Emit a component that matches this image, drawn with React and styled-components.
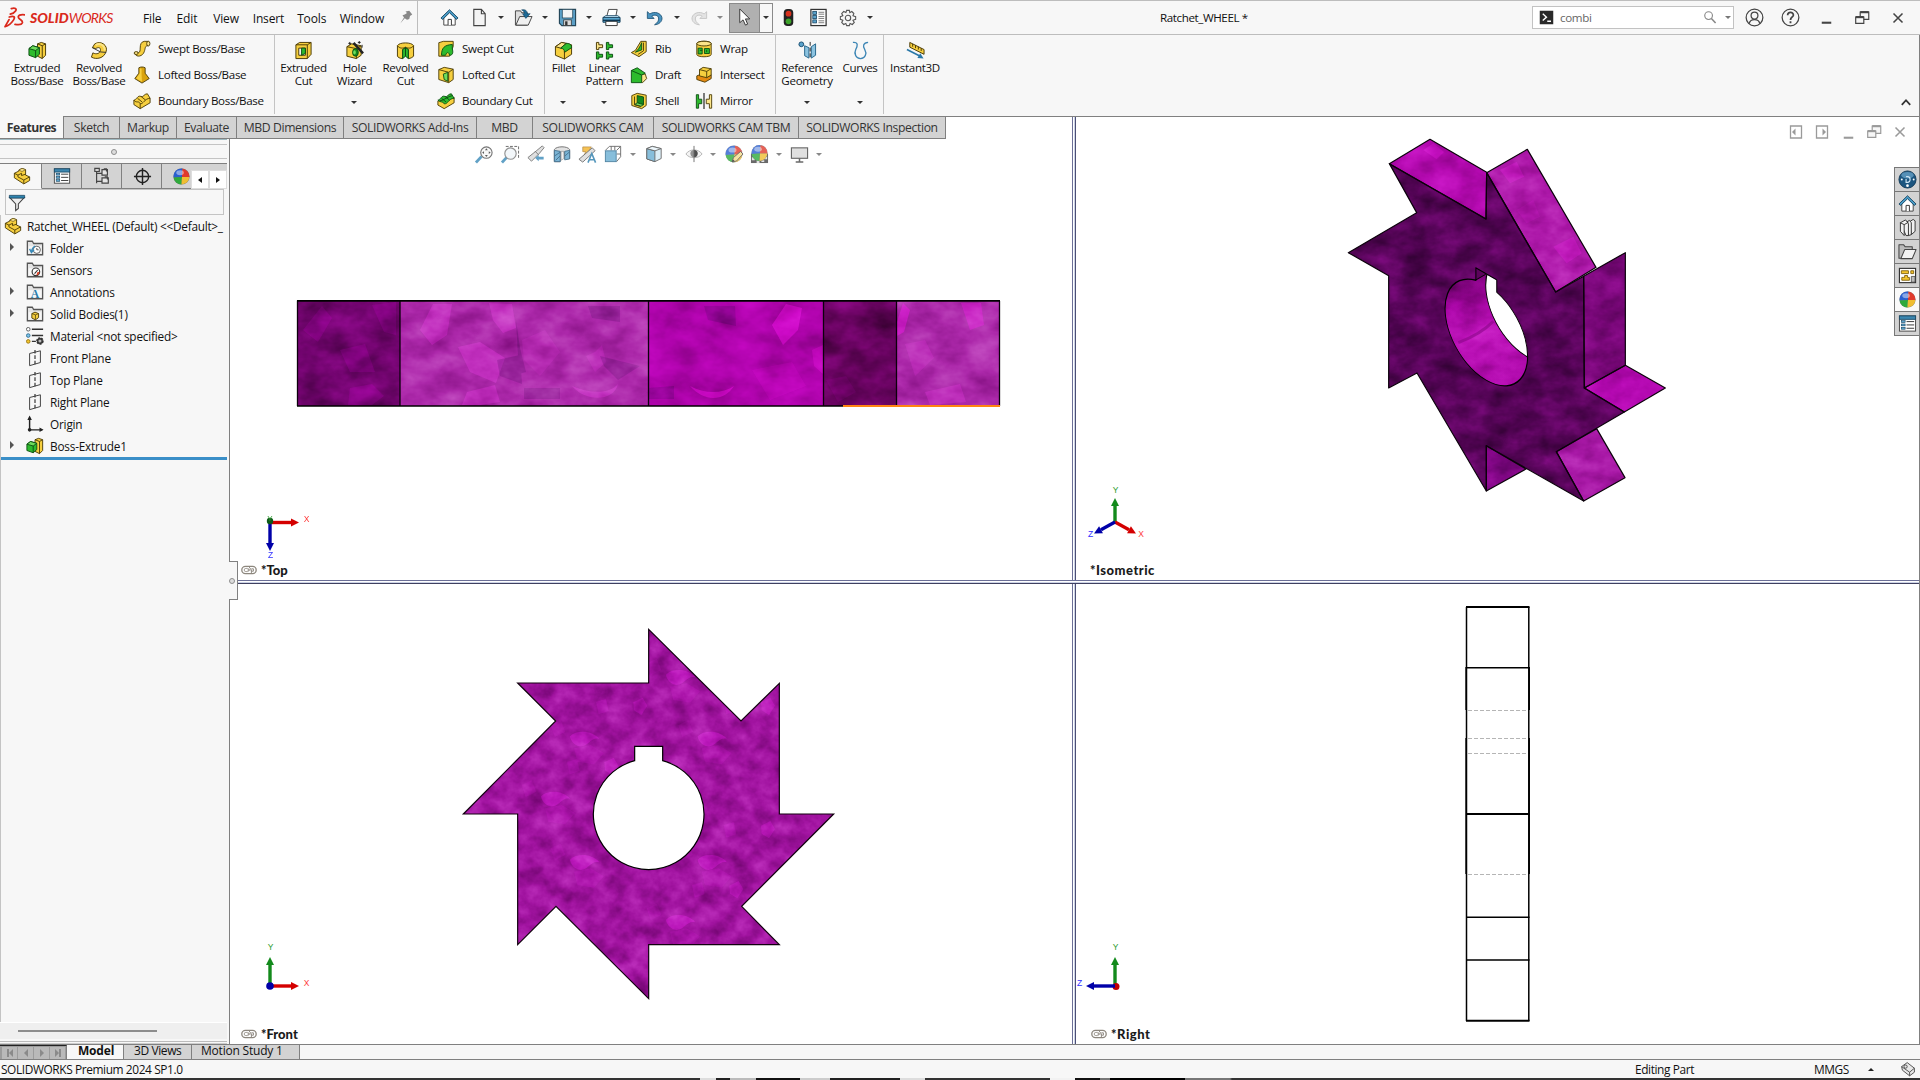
import React from "react";
import styled, { createGlobalStyle } from "styled-components";

const Global = createGlobalStyle`
  * { box-sizing: border-box; }
  html, body { margin: 0; padding: 0; }
  body { background: #f7f7f7; overflow: hidden; }
  svg { display: block; flex: none; }
`;

const C = {
  bg: "#f7f7f7",
  line: "#bdbdbd",
  dark: "#808080",
  tab: "#d3d3d3",
  blue: "#1d6a96",
  Y: "#f6cf3f",
  YL: "#fbe58a",
  YD: "#d9a30f",
  G: "#2dbb2d",
  GL: "#6fdc5c",
  GD: "#128a1d",
  S: "#4a3a05",
};

/* ---------- shell ---------- */
const Window = styled.div`
  width: 1920px;
  height: 1080px;
  display: flex;
  flex-direction: column;
  background: ${C.bg};
  color: #111;
  font-family: "Open Sans", "Noto Sans", sans-serif;
  font-size: 12px;
  overflow: hidden;
`;
const TitleBar = styled.header`
  flex: none;
  height: 35px;
  display: flex;
  align-items: center;
  border-top: 1px solid ${C.line};
  border-bottom: 1px solid ${C.line};
`;
const Brand = styled.div`
  width: 135px;
  padding-left: 4px;
  display: flex;
  align-items: center;
  gap: 5px;
  color: #da291c;
`;
const BrandName = styled.span`
  font: italic 400 14px/20px Lato, "Noto Sans", sans-serif;
  letter-spacing: -0.75px;
  padding-top: 1px;
  b { font-weight: 900; letter-spacing: 0; }
`;
const Menu = styled.nav`
  width: 283px;
  height: 100%;
  display: flex;
  align-items: center;
  padding-left: 8px;
  border-right: 1px solid ${C.line};
`;
const MenuItem = styled.span`
  width: ${(p) => p.$w}px;
  line-height: 20px;
  padding-top: 2px;
  letter-spacing: -0.15px;
`;
const QuickBar = styled.div`
  display: flex;
  align-items: center;
  height: 100%;
  padding-left: 19px;
  width: 742px;
`;
const Slot = styled.span`
  width: ${(p) => p.$w}px;
  margin-left: ${(p) => p.$ml || 0}px;
  display: flex;
  justify-content: center;
  align-items: center;
  flex: none;
  opacity: ${(p) => p.$o || 1};
`;
const BigDrop = styled.span`
  margin: 11px 1px 0 0;
`;
const SelectTool = styled.span`
  width: 44px;
  height: 30px;
  display: flex;
  flex: none;
  border: 1px solid #8a8a8a;
`;
const SelectFace = styled.span`
  width: 30px;
  background: #b0b0b0;
  border-right: 1px solid #8a8a8a;
  display: flex;
  align-items: center;
  justify-content: center;
`;
const Drop = styled.span`
  display: block;
  width: 0;
  height: 0;
  border: 3px solid transparent;
  border-top: 3px solid ${(p) => p.$c || "#333"};
  border-bottom: 0;
`;
const Center = styled.span`
  flex: 1;
  display: flex;
  align-items: center;
  justify-content: center;
`;
const DocTitle = styled.div`
  width: 372px;
  line-height: 18px;
  font-size: 11.6px;
  letter-spacing: -0.4px;
`;
const SearchBox = styled.div`
  width: 202px;
  height: 23px;
  display: flex;
  align-items: center;
  background: #fff;
  border: 1px solid #c2c2c2;
  padding-left: 6px;
  color: #666;
  margin-top: -1px;
  font-size: 11.6px;
  letter-spacing: -0.35px;
`;
const SearchText = styled.span`
  flex: 1;
  padding-left: 6px;
`;
const WinButtons = styled.div`
  display: flex;
  align-items: center;
  padding-left: 2px;
`;

/* ---------- ribbon ---------- */
const Ribbon = styled.div`
  flex: none;
  height: 82px;
  display: flex;
  border-bottom: 1px solid ${C.dark};
  border-right: 1px solid ${C.dark};
  font-size: 11.6px;
  letter-spacing: -0.32px;
`;
const Group = styled.div`
  width: ${(p) => p.$w}px;
  height: 79px;
  display: flex;
  flex: none;
  padding-left: ${(p) => p.$pl || 0}px;
  border-right: ${(p) => (p.$last ? 0 : 1)}px solid #c4c4c4;
`;
const Big = styled.div`
  width: ${(p) => p.$w}px;
  flex: none;
  display: flex;
  flex-direction: column;
  align-items: center;
  padding-top: 6px;
  height: 79px;
`;
const BigLabel = styled.span`
  height: 29px;
  margin-top: 1px;
  text-align: center;
  line-height: 13px;
  white-space: pre;
`;
const Col = styled.div`
  display: flex;
  flex-direction: column;
  margin-left: ${(p) => p.$ml || 0}px;
  width: ${(p) => p.$w || 138}px;
  flex: none;
`;
const Small = styled.div`
  height: 26px;
  display: flex;
  align-items: center;
  gap: 7px;
  white-space: nowrap;
  padding-top: 1px;
`;
const Collapse = styled.div`
  margin-left: auto;
  align-self: flex-end;
  padding: 0 6px 7px 0;
`;

/* ---------- body ---------- */
const Body = styled.main`
  flex: none;
  height: 927px;
  display: flex;
  border-right: 1px solid ${C.dark};
`;
const LeftHalf = styled.section`
  width: 1072px;
  flex: none;
  display: flex;
  flex-direction: column;
  background: #fff;
`;
const TabStrip = styled.div`
  height: 22px;
  flex: none;
  display: flex;
`;
const Tab = styled.span`
  width: ${(p) => p.$w}px;
  height: ${(p) => (p.$on ? 23 : 22)}px;
  margin-top: ${(p) => (p.$on ? -1 : 0)}px;
  padding-top: ${(p) => (p.$on ? 1 : 0)}px;
  background: ${(p) => (p.$on ? C.bg : C.tab)};
  border-right: 1px solid ${C.dark};
  border-bottom: 1px solid ${C.dark};
  display: flex;
  flex: none;
  align-items: center;
  justify-content: center;
  white-space: nowrap;
  font-size: 12.2px;
  font-weight: ${(p) => (p.$on ? 700 : 400)};
  color: #333;
  letter-spacing: ${(p) => (p.$on ? -0.5 : -0.38)}px;
`;
const LeftRow = styled.div`
  flex: 1;
  display: flex;
`;
const Views = styled.div`
  flex: 1;
  display: flex;
  flex-direction: column;
  min-width: 0;
`;
const Pane = styled.div`
  position: relative;
  height: ${(p) => p.$h}px;
  flex: none;
  background: #fff;
  display: flex;
  flex-direction: column;
  justify-content: space-between;
  overflow: hidden;
`;
const Scene = styled.svg`
  position: absolute;
  inset: 0;
`;
const ViewLabel = styled.div`
  position: relative;
  margin-top: auto;
  display: flex;
  align-items: center;
  gap: 4px;
  height: 20px;
  padding-left: ${(p) => p.$pl}px;
  font: 900 13px/20px Lato, sans-serif;
  letter-spacing: ${(p) => p.$ls ?? 0}px;
  color: #1a1a1a;
`;
const HBar = styled.div`
  height: 4px;
  flex: none;
  border-top: 1px solid #6b6f97;
  border-bottom: 1px solid #3f4060;
  background: linear-gradient(#fff 50%, #ccd3e6 50%);
`;
const VBar = styled.div`
  height: ${(p) => p.$h}px;
  width: 4px;
  border-left: 1px solid #6b6f97;
  border-right: 1px solid #4c4f75;
  background: linear-gradient(90deg, #fff 50%, #ccd3e6 50%);
`;
const Divider = styled.div`
  width: 4px;
  flex: none;
`;
const HeadsUp = styled.div`
  position: relative;
  display: flex;
  align-items: center;
  height: 30px;
  padding-left: 241px;
`;
const DocControls = styled.div`
  position: relative;
  display: flex;
  justify-content: flex-end;
  height: 30px;
  align-items: center;
  padding-right: 6px;
`;
const TaskPane = styled.div`
  position: absolute;
  right: 0;
  top: 50px;
  width: 25px;
  border: 1px solid #777;
  border-right: 0;
`;
const TaskItem = styled.div`
  height: ${(p) => (p.$first ? 23 : 24)}px;
  border-top: ${(p) => (p.$first ? 0 : 1)}px solid #777;
  background: ${(p) => (p.$on ? "#fafafa" : C.tab)};
  display: flex;
  align-items: center;
  justify-content: center;
`;

/* ---------- feature manager ---------- */
const Manager = styled.aside`
  position: relative;
  width: 230px;
  flex: none;
  background: ${C.bg};
  border-right: 1px solid ${C.dark};
  display: flex;
  flex-direction: column;
`;
const Grip = styled.div`
  width: 227px;
  height: 20px;
  border-top: 1px solid #9fb9c0;
  border-bottom: 1px solid #c4c4c4;
  display: flex;
  flex-direction: column;
  align-items: center;
  flex: none;
  &::before { content: ""; width: 100%; height: 4px; flex: none; border-bottom: 1px solid #c4c4c4; margin-bottom: 4px; }
`;
const Dot = styled.span`
  width: 6px;
  height: 6px;
  flex: none;
  border-radius: 50%;
  border: 1px solid #8e8e8e;
  background: #ddd;
`;
const MgrTabs = styled.div`
  margin-top: 4px;
  width: 227px;
  height: 26px;
  display: flex;
  flex: none;
  overflow: hidden;
`;
const MgrTab = styled.span`
  width: ${(p) => p.$w}px;
  flex: none;
  background: ${(p) => (p.$on ? C.bg : C.tab)};
  border-top: 1px solid ${C.dark};
  border-right: ${(p) => (p.$open ? 0 : 1)}px solid ${C.dark};
  border-bottom: 1px solid ${(p) => (p.$on ? C.bg : C.dark)};
  display: flex;
  align-items: center;
  justify-content: center;
  padding-left: ${(p) => p.$pl || 0}px;
`;
const Scrollers = styled.span`
  margin-left: auto;
  display: flex;
  align-items: flex-end;
  flex: none;
  width: 36px;
  background: ${C.tab};
  border-top: 1px solid ${C.dark};
`;
const Scroller = styled.span`
  width: 18px;
  height: 19px;
  background: #fff;
  border: 1px solid #ddd;
  display: flex;
  align-items: center;
  justify-content: center;
`;
const Side = styled.span`
  display: block;
  width: 0;
  height: 0;
  border: ${(p) => p.$s || 3}px solid transparent;
  ${(p) => (p.$left ? `border-right: 4px solid ${p.$c || "#111"}; border-left: 0;` : `border-left: 4px solid ${p.$c || "#111"}; border-right: 0;`)}
`;
const Filter = styled.div`
  margin: 0 0 0 5px;
  width: 219px;
  height: 26px;
  border: 1px solid #c4c4c4;
  padding: 4px 0 0 2px;
  flex: none;
`;
const Tree = styled.div`
  width: 228px;
  border-left: 1px solid #c4c4c4;
  flex: 1;
`;
const Row = styled.div`
  height: 22px;
  display: flex;
  align-items: center;
  white-space: nowrap;
  font-size: 11.8px;
  letter-spacing: ${(p) => p.$ls ?? -0.2}px;
`;
const Expander = styled.span`
  width: ${(p) => (p.$root ? 3 : 25)}px;
  padding-left: ${(p) => (p.$root ? 0 : 9)}px;
  padding-bottom: 2px;
  flex: none;
`;
const RowIcon = styled.span`
  width: 20px;
  margin-right: ${(p) => (p.$root ? 3 : 4)}px;
  flex: none;
`;
const Rollback = styled.div`
  height: 3px;
  width: 226px;
  background: #3a8fc8;
`;
const HScroll = styled.div`
  height: 17px;
  width: 227px;
  background: #efefef;
  border-top: 1px solid #fff;
  padding: 7px 0 0 18px;
  flex: none;
  &::before { content: ""; display: block; width: 139px; height: 2px; background: #8c8c8c; }
`;
const HScrollFoot = styled.div`
  height: 5px;
  flex: none;
  width: 227px;
  background: linear-gradient(#f7f7f7 2px, #bbb 2px, #bbb 3px, #f7f7f7 3px, #f7f7f7 4px, #ccc 4px);
`;
const SplitHandle = styled.div`
  position: absolute;
  right: -9px;
  top: 422px;
  width: 9px;
  height: 39px;
  background: ${C.bg};
  border: 1px solid ${C.dark};
  border-left: 0;
  display: flex;
  align-items: center;
  z-index: 3;
`;

/* ---------- bottom ---------- */
const SheetBar = styled.div`
  flex: none;
  height: 16px;
  display: flex;
  border-top: 1px solid ${C.dark};
  border-bottom: 1px solid ${C.dark};
`;
const NavButtons = styled.div`
  width: 67px;
  display: flex;
  gap: 1px;
  padding: 1px 1px 0 2px;
  background: #9c9c9c;
  border-top: 1px solid #222;
  border-right: 1px solid ${C.dark};
`;
const NavButton = styled.span`
  flex: 1;
  background: #b9b9b9;
  display: flex;
  align-items: center;
  justify-content: center;
  &::before { content: ""; width: ${(p) => (p.$first ? 2 : 0)}px; height: 8px; background: #8a8a8a; }
  &::after { content: ""; width: ${(p) => (p.$last ? 2 : 0)}px; height: 8px; background: #8a8a8a; }
`;
const Sheet = styled.span`
  width: ${(p) => p.$w}px;
  padding-left: ${(p) => p.$pl}px;
  background: ${(p) => (p.$on ? C.bg : C.tab)};
  border-right: 1px solid ${C.dark};
  font-weight: ${(p) => (p.$on ? 700 : 400)};
  line-height: 12px;
  white-space: nowrap;
  letter-spacing: ${(p) => p.$ls ?? -0.2}px;
`;
const Status = styled.footer`
  flex: none;
  height: 18px;
  display: flex;
  align-items: center;
  line-height: 18px;
  padding-left: 1px;
  white-space: nowrap;
  font-size: 11.9px;
  letter-spacing: ${(p) => p.$ls ?? -0.4}px;
`;
const StatusItem = styled.span`
  width: ${(p) => p.$w}px;
  flex: none;
`;
const Up = styled.span`
  width: 0;
  height: 0;
  border: 3px solid transparent;
  border-bottom: 3px solid #222;
  border-top: 0;
`;
const Under = styled.div`
  flex: none;
  height: 2px;
  background: linear-gradient(90deg, #333 0 700px, #ddd 700px 716px, #222 716px 730px, #bbb 730px 756px, #111 756px 800px, #ccc 800px 830px, #222 830px 900px, #ddd 900px 925px, #333 925px 1050px, #f2f2f2 1050px 1075px, #111 1075px 1100px, #777 1100px 1110px, #000 1110px 1185px, #777 1185px 1230px, #333 1232px);
`;

/* ---------- icons ---------- */
const st = { stroke: C.S, strokeWidth: 1, strokeLinejoin: "round" };
const gs = { stroke: "#0b4d12", strokeWidth: 1, strokeLinejoin: "round" };
const ln = { fill: "none", stroke: "#444", strokeWidth: 1.3 };
const Globe = () => (
  <g>
    <circle cx="10" cy="10" r="8.500" fill="#333" opacity=".6" />
    <path d="M10.500 10.500L11 1.700A8.300 8.300 0 0 0 1.700 11Z" fill="#2a5fd0" />
    <path d="M10.500 10.500L11 1.700A8.300 8.300 0 0 1 18.300 10.500Z" fill="#e03a2d" />
    <path d="M10.500 10.500L1.700 11A8.300 8.300 0 0 0 10 18.300Z" fill="#2faa3c" />
    <path d="M10.500 10.500L18.300 10.500A8.300 8.300 0 0 1 10 18.300Z" fill="#f0be32" />
    <ellipse cx="8.500" cy="6" rx="4" ry="2.600" fill="#fff" opacity=".45" />
  </g>
);
const FolderBox = () => (
  <g>
    <path d="M1.500 17.500V2.500H7L8.500 5H18.500V17.500Z" fill="#e4e4e4" stroke="#555" strokeWidth="1.4" />
    <path d="M3 8H17V16H3Z" fill="#f7f7f7" />
  </g>
);
const Plane = () => (
  <g>
    <path d="M4 5L16 2V15L4 18.500Z" fill="none" stroke="#444" strokeWidth="1.1" />
    <path d="M10 1V19" stroke="#333" strokeWidth="1.3" strokeDasharray="4 2" />
  </g>
);
const House = () => (
  <g>
    <path d="M4 10V18H16V10L10 4Z" fill="#fff" stroke="#444" />
    <path d="M8.500 18V12H12V18" fill="#fff" stroke="#333" />
    <path d="M1 10.500L10 1.800L19 10.500L17.200 12L10 5L2.800 12Z" fill="#4a9cc7" stroke="#123f5c" strokeWidth=".9" />
  </g>
);
const Part = () => (
  <g {...st}>
    <path d="M1.500 7L6.500 4.500V3.500L10 1.500L14 3V9L18.500 11V15L12 18.800L1.500 12Z" fill={C.Y} />
    <path d="M1.500 7L5.500 9V11L12 14.500L18.500 11M12 14.500V18.500M5.500 9L9.500 7V9.500L14 8" fill="none" />
    <path d="M6.500 3.500L10 1.500L14 3L10 5Z" fill={C.YL} strokeWidth=".6" />
  </g>
);
const Extrude = () => (
  <g>
    <path d="M10 3L14 1.500L18.500 3V15L15 18.500L10 16Z" fill={C.Y} {...st} />
    <path d="M15 5L18.500 3M15 5V18.500M15 5L10 3" fill="none" {...st} />
    <path d="M1 8L5 5L12 7V14L8 17.500L1 15Z" fill={C.G} {...gs} />
    <path d="M1 8L8 10L12 7L5 5Z" fill={C.GL} {...gs} />
    <path d="M8 10V17.500" {...gs} />
  </g>
);
const Sheet7 = () => (
  <g>
    <rect x="1.500" y="2" width="17" height="16" fill="#fff" stroke="#444" />
    <rect x="1.500" y="2" width="17" height="3.600" fill="#3c87b0" stroke="#1d4e6b" />
    {[8, 11.5, 15].map((y) => (
      <g key={y}>
        <rect x="3.500" y={y - 1} width="4" height="2" fill="#5ba3cc" stroke="#123f5c" strokeWidth=".6" />
        <path d={`M9 ${y}H17`} stroke="#333" />
      </g>
    ))}
  </g>
);
const icons = {
  ds: (
    <g fill="none" stroke="#da291c" strokeWidth="1.700" strokeLinecap="round" strokeLinejoin="round">
      <path d="M7 1.500C10.500 .3 12.500 1.500 11 3.800C10 5.300 7.500 6.500 6 6.800" />
      <path d="M5 9.500C9.500 8 11 9.500 9 12.500C7 15.500 3.500 18 1 18.700L4.800 12" />
      <path d="M20 7.500C16 6.800 12.500 8 14 10.500C15.500 12.500 18 12.500 17.500 15C16.500 17.500 13 17 10.500 16.500" />
    </g>
  ),
  pin: <path d="M10 2L15 1L19 6L16 8L15 12L12 13L9 11L3 18L8 10L6 7L9 6L12 4Z" fill="#888" />,
  home: <House />,
  newdoc: <path d="M4 1.500H12L16 6V18.500H4ZM12 1.500V6H16" fill="#f4f4f4" stroke="#444" strokeWidth="1.2" />,
  open: (
    <g>
      <path d="M1.500 18V3H7L8 5H14V18Z" fill="#ddd" stroke="#444" />
      <path d="M2 18L6 9H19L15 18Z" fill="#f0f0f0" stroke="#444" />
      <path d="M8 2C12 1 14 3 14 6H17L12.500 11L9 6H11C11 4 10 3 8 2Z" fill="#1d6a96" stroke="#0d3d5c" strokeWidth=".6" />
    </g>
  ),
  save: (
    <g>
      <path d="M1.500 1.500H18.500V18.500H4L1.500 16Z" fill="#5b9fc6" stroke="#24475a" strokeWidth="1.200" />
      <rect x="4.500" y="1.500" width="11" height="9" fill="#f4f4f4" stroke="#24475a" strokeWidth=".8" />
      <rect x="6" y="12.500" width="8" height="6" fill="#dcdcdc" stroke="#333" strokeWidth=".8" />
      <rect x="7.500" y="14" width="2.500" height="4" fill="#333" />
    </g>
  ),
  print: (
    <g>
      <path d="M5 9L7 1.500H16L14.500 9" fill="#fff" stroke="#444" />
      <path d="M1 10H19V15H1Z" fill="#5aa7cf" stroke="#123f5c" />
      <path d="M1 10L4 8H16.500L19 10Z" fill="#b8dcee" stroke="#123f5c" strokeWidth=".8" />
      <path d="M4 14H16V18.500H4Z" fill="#fff" stroke="#333" />
      <path d="M1 13H19" stroke="#0e3550" strokeWidth="1.500" />
    </g>
  ),
  undo: (
    <path d="M1.500 3V10.500H9L6.500 8C9 6 13.500 6.500 14 10C14.500 13 12.500 15.500 9.500 17.500C14 17.500 18.500 14 17.700 9.500C16.700 4.500 9.500 2 4.300 5.500Z" fill="#4a94c0" stroke="#174d70" strokeWidth=".9" />
  ),
  redo: (
    <path d="M18.500 3V10.500H11L13.500 8C11 6 6.500 6.500 6 10C5.500 13 7.500 15.500 10.500 17.500C6 17.500 1.500 14 2.300 9.500C3.300 4.500 10.500 2 15.700 5.500Z" fill="#e3e3e3" stroke="#c0c0c0" strokeWidth=".9" />
  ),
  cursor: <path d="M5 1V15.500L8.500 12.500L11 18L13.300 17L11 11.500H15.500Z" fill="#fff" stroke="#333" strokeWidth="1" />,
  traffic: (
    <g>
      <rect x="5" y="1" width="10" height="18" rx="4" fill="#222" />
      <circle cx="10" cy="6" r="3" fill="#d8311d" />
      <circle cx="10" cy="14" r="3" fill="#3da32a" />
    </g>
  ),
  options: (
    <g>
      <rect x="2" y="1.500" width="16" height="17" fill="#fff" stroke="#333" strokeWidth="1.300" />
      {[4.5, 9, 13.5].map((y) => (
        <g key={y}>
          <rect x="4" y={y - 1} width="4" height="3.200" fill="#5ba3cc" stroke="#123f5c" strokeWidth=".8" />
          <path d={`M10 ${y}H16M10 ${y + 2}H16`} stroke="#555" strokeWidth=".8" />
        </g>
      ))}
    </g>
  ),
  gear: (
    <g fill="none" stroke="#555" strokeWidth="1.200">
      <path d="M8.500 1.500H11.500L12 4L14.200 2.800L16.500 5L15.500 7.500L18.500 8.500V11.500L15.500 12.500L17 15L14.800 17.200L12.300 16L11.500 18.500H8.500L7.600 16L5.200 17.200L3 15L4.300 12.500L1.500 11.500V8.500L4.300 7.500L3 5L5.200 2.800L7.700 4Z" />
      <circle cx="10" cy="10" r="3" />
    </g>
  ),
  prompt: (
    <g>
      <rect x="1" y="1" width="18" height="18" fill="#2a2a2a" />
      <path d="M5 5L10 9.500L5 14M11 15H16" fill="none" stroke="#fff" strokeWidth="1.800" />
    </g>
  ),
  search: (
    <g fill="none" stroke="#888">
      <circle cx="8" cy="8" r="5.500" strokeWidth="1.600" />
      <path d="M12 12L18 18.500" strokeWidth="2.200" />
    </g>
  ),
  user: (
    <g {...ln}>
      <circle cx="10" cy="10" r="8.800" />
      <circle cx="10" cy="8" r="3.600" />
      <path d="M4.500 16.500C5 13 7.500 12.300 10 12.300S15 13 15.500 16.500" />
    </g>
  ),
  help: (
    <g {...ln}>
      <circle cx="10" cy="10" r="8.800" />
      <path d="M7 7.500C7 3.500 13.200 4 13 7.500C12.800 9.800 10 9.500 10 12.500M10 14V16" strokeWidth="1.900" />
    </g>
  ),
  min: <path d="M5 15.500H15" stroke="currentColor" strokeWidth="2.200" />,
  restore: (
    <g fill={C.bg} stroke="currentColor" strokeWidth="1.300">
      <path d="M8 3.500H17.500V11.500H8Z" />
      <path d="M8 3.500H17.500" strokeWidth="2.400" />
      <path d="M3 9H12V16H3Z" />
      <path d="M3 9H12" strokeWidth="2.400" />
    </g>
  ),
  close: <path d="M5 5L15 15M15 5L5 15" stroke="currentColor" strokeWidth="1.700" />,
  dockL: (
    <g>
      <path d="M4.500 4V16H15.500V4ZM4 4H16" fill="none" stroke="currentColor" strokeWidth="1.300" />
      <path d="M9.500 6.500L6 10L9.500 13.500Z" fill="currentColor" />
    </g>
  ),
  dockR: (
    <g>
      <path d="M4.500 4V16H15.500V4ZM4 4H16" fill="none" stroke="currentColor" strokeWidth="1.300" />
      <path d="M10.500 6.500L14 10L10.500 13.500Z" fill="currentColor" />
    </g>
  ),
  chevron: <path d="M4 14L10 7.500L16 14" fill="none" stroke="#333" strokeWidth="2.600" />,

  extrude: <Extrude />,
  revolve: (
    <g {...st}>
      <path d="M5 3C12 -1 19 5 17 11C15 18 7 20 1.500 17L3 12.500C7 14.500 10.500 13 11 10C11.500 7 9 6 6 8L2.500 7Z" fill={C.Y} />
      <path d="M2.500 7L11 11.500L17 12" fill="none" stroke="#333" />
      <path d="M6 4C11 1.500 16 5 15.500 10" fill="none" stroke={C.YL} strokeWidth="2" />
    </g>
  ),
  sweep: (
    <g>
      <path d="M12.500 1.500H17V6.500C13 6 14 9 12.500 13C11 18 4 20 2 15L5 13.500C7 15 8 13 8 9C8 5 9 2 12.500 1.500Z" fill={C.Y} {...st} />
      <ellipse cx="17" cy="4" rx="1.800" ry="2.600" fill={C.YL} {...st} />
      <ellipse cx="3.500" cy="14.500" rx="2.200" ry="1.600" fill={C.YL} {...st} />
    </g>
  ),
  loft: (
    <g>
      <path d="M6.500 2C8 .8 12 .8 13.500 2V8L18 14L10 19L2 14L6.500 8Z" fill={C.YD} {...st} />
      <path d="M7.500 2.500L9.500 3V9L10 17.500L3.500 14L7.500 8Z" fill={C.Y} />
    </g>
  ),
  boundary: (
    <g {...st}>
      <path d="M1 9C4 9 5 3 9 5C12 6 12 2 16 2L19 7V12L8 18.500L1 14Z" fill={C.Y} />
      <path d="M1 9C4 13 6 9 8 13C11 14 13 7 19 7M8 13V18.500M5 7L10 11M9 5L14 9" fill="none" />
    </g>
  ),
  ecut: (
    <g>
      <path d="M2 4L6 1.500H18V14L14 18.500H2Z" fill={C.Y} {...st} />
      <path d="M2 4H14L18 1.500M14 4V18.500" fill="none" {...st} />
      <path d="M5 7.500H12V15H5Z" fill="#f3f3f3" {...st} />
      <path d="M8 7.500H12V13L8 15Z" fill={C.G} {...gs} />
    </g>
  ),
  hole: (
    <g>
      <path d="M2 6L7 3L17 5V15L12 18.500L2 16Z" fill={C.Y} {...st} />
      <path d="M2 6L12 8L17 5M12 8V18.500" fill="none" {...st} />
      <ellipse cx="11" cy="12" rx="3" ry="4" fill={C.GD} {...gs} />
      <ellipse cx="10" cy="12" rx="1.400" ry="2.200" fill={C.GL} />
      <path d="M9 2L19 13" stroke="#222" strokeWidth="2.600" />
      <path d="M5 1V4M3.500 2.500H6.500M15 0V3M13.500 1.500H16.500M18 4V7" stroke="#222" />
    </g>
  ),
  rcut: (
    <g>
      <path d="M1.500 5C3 1 17 1 18.500 5V16C16 18.500 13 18.500 13 18.500V9L10 7L7 9V18.500C4 18.500 2 17 1.500 16Z" fill={C.Y} {...st} />
      <path d="M1.500 5C4 8 7 8 10 6.500C13 8 16 8 18.500 5" fill="none" {...st} />
      <path d="M7 9L10 7V16L7 18.500ZM13 9L10 7V16L13 18.500Z" fill={C.G} {...gs} />
    </g>
  ),
  scut: (
    <g>
      <path d="M2 3L7 1.500H18V7L14 18H2Z" fill={C.Y} {...st} />
      <path d="M5 17C5 9 8 5.500 17 5V10C18 13 18 17 14 17C13 13 11 13 9.500 17Z" fill={C.G} {...gs} />
    </g>
  ),
  lcut: (
    <g>
      <path d="M2 4L8 1.500L18 3.500V15L13 18.500L2 15Z" fill={C.Y} {...st} />
      <path d="M2 4L13 7L18 3.500M13 7V18.500" fill="none" {...st} />
      <path d="M7 9L12 7V17L8 15Z" fill={C.GL} {...gs} />
    </g>
  ),
  bcut: (
    <g>
      <path d="M1 10L19 6V12L8 18.500L1 14.500Z" fill={C.Y} {...st} />
      <path d="M1 9C4 9 5 3 9 5C12 6 12 2 16 2L19 7C13 7 12 14 8 13C6 10 4 12 1 9Z" fill={C.G} {...gs} />
      <path d="M5 7L10 11M9 5L14 9M3 10C8 9 12 5 17 4" fill="none" {...gs} />
    </g>
  ),
  fillet: (
    <g>
      <path d="M1.500 6L8 1.500L18.500 4V14L11 19L1.500 15Z" fill={C.Y} {...st} />
      <path d="M1.500 6L8 1.500L13 2.500L7 7.500Z" fill={C.YL} {...st} />
      <path d="M13 2.500C17 2.500 18.500 4 18.500 7L11 12C11 9 10 8 7 7.500Z" fill={C.G} {...gs} />
      <path d="M11 11V19" {...st} />
    </g>
  ),
  pattern: (
    <g>
      <path d="M1.500 1.500H4V4H8V7H4V9H1.500Z" fill={C.YL} {...st} />
      <path d="M12 1.500H14.500V4H18.500V7H14.500V9H12Z" fill={C.G} {...gs} />
      <path d="M1.500 11.500H4V14H8V17H4V19H1.500Z" fill={C.G} {...gs} />
      <path d="M12 11.500H14.500V14H18.500V17H14.500V19H12Z" fill={C.G} {...gs} />
    </g>
  ),
  rib: (
    <g>
      <path d="M12 1.500H18V13L10 18.500L1.500 14L6 11.500Z" fill={C.Y} {...st} />
      <path d="M13 3V11L6 13.500C9 11 11 8 13 3Z" fill={C.G} {...gs} />
      <path d="M15 3V12L9 16" fill="none" {...st} />
    </g>
  ),
  draft: (
    <g>
      <path d="M10 9H17L18.500 14L14 18.500L10 16Z" fill={C.YL} {...st} />
      <path d="M1.500 5L8 2L17 8L13 10V18.500H1.500Z" fill={C.G} {...gs} />
      <path d="M1.500 5L13 10" {...gs} />
    </g>
  ),
  shell: (
    <g>
      <path d="M2 4L8 1.500L18 3.500V15L13 18.500L2 15Z" fill={C.Y} {...st} />
      <path d="M8 4L15 5.500V14L8 12Z" fill={C.GD} {...gs} />
      <path d="M8 12L15 14L12 16L5 14Z" fill={C.GL} {...gs} />
      <path d="M5 5V14L12 16" fill="none" {...st} />
    </g>
  ),
  wrap: (
    <g>
      <path d="M2 4C2 .5 18 .5 18 4V16C18 19.500 2 19.500 2 16Z" fill={C.Y} {...st} />
      <ellipse cx="10" cy="4" rx="8" ry="2.600" fill={C.YL} {...st} />
      <path d="M3.500 9H8V15.500H3.500ZM10.500 9.500H16V15H10.500Z" fill={C.G} {...gs} />
      <path d="M5.500 11.500H8M13 11V13.500" {...gs} />
    </g>
  ),
  intersect: (
    <g>
      <path d="M2 11L7 9L14 12L18 10V14L11 18L2 15Z" fill="#e58a12" {...st} />
      <path d="M5 4L9 1.500L18 3V10L13 13L5 11Z" fill={C.Y} {...st} />
      <path d="M5 4L13 6L18 3M13 6V13" fill="none" {...st} />
    </g>
  ),
  mirror: (
    <g>
      <path d="M1.500 3H4V8H7.500V13H4V18H1.500Z" fill={C.G} {...gs} />
      <path d="M18.500 3H16V8H12.500V13H16V18H18.500Z" fill={C.YL} {...st} />
      <path d="M10 1V19" stroke="#222" strokeWidth="1.300" />
    </g>
  ),
  refgeo: (
    <g>
      <circle cx="3.500" cy="3.500" r="2.500" fill="#5ba3cc" stroke="#174d70" />
      <path d="M7 5L11.500 7V18L7 15.500ZM14 6L18.500 3V15L14 18Z" fill="#8cc3e0" stroke="#24648a" />
      <path d="M12.800 1V19" stroke="#222" strokeDasharray="4 2" />
    </g>
  ),
  curves: (
    <path d="M2 1.500C8 1 7 5 5 9C3 13 5 18.500 10 18.500C15 18.500 17 13 14.500 9C12 5 13 2 18 1.500" fill="none" stroke="#3d86b5" strokeWidth="1.400" />
  ),
  instant: (
    <g>
      <path d="M4 1.500L19 9V14L4 6.500Z" fill={C.Y} {...st} />
      <path d="M7 3V6M10 4.500V7.500M13 6V9M16 7.500V10.500" {...st} />
      <path d="M1 9L15 16" stroke="#2a78a8" strokeWidth="1.800" />
      <path d="M18.500 18.500L12 18L15 13Z" fill="#2a78a8" />
    </g>
  ),

  part: <Part />,
  props: <Sheet7 />,
  config: (
    <g {...ln}>
      <path d="M2 1.500H7V5H2ZM4 5V18M4 7H10M4 16H10" />
      <path d="M10 3H16V9H10ZM10 12H17V18H10Z" fill="#e5e5e5" />
      <path d="M12 2H15V5M13 11H16V14" />
    </g>
  ),
  target: (
    <g fill="none" stroke="#222" strokeWidth="1.500">
      <circle cx="10" cy="10" r="6.500" />
      <path d="M10 1V19M1 10H19" />
    </g>
  ),
  globe: <Globe />,
  filter: (
    <g>
      <path d="M2 4L8.500 11V18.500L11.500 16V11L18 4Z" fill="#eee" stroke="#444" strokeWidth="1.200" />
      <path d="M1.500 1.500H18.500V4.500H1.500Z" fill="#2f83ae" stroke="#123f5c" strokeWidth=".8" />
    </g>
  ),
  folder: (
    <g>
      <FolderBox />
      <circle cx="12" cy="12" r="4" fill="#fff" stroke="#555" />
      <path d="M12 10V12H14" fill="none" stroke="#444" />
      <path d="M4 11L6 15L9 12M6 14C7 10 8 9 10 8" fill="none" stroke="#3a8ab8" strokeWidth="1.500" />
    </g>
  ),
  sensors: (
    <g>
      <FolderBox />
      <circle cx="11" cy="12" r="4.200" fill="#fff" stroke="#333" strokeWidth="1.300" />
      <path d="M9.500 14L13 10" stroke="#333" strokeWidth="1.200" />
      <path d="M11.500 16A4 4 0 0 0 15 12L12.500 12.500Z" fill="#e0452a" />
    </g>
  ),
  annot: (
    <g>
      <FolderBox />
      <text x="10" y="16.300" textAnchor="middle" fontFamily="Liberation Serif, serif" fontWeight="700" fontSize="13" fill="#2a7cab">A</text>
    </g>
  ),
  bodies: (
    <g>
      <FolderBox />
      <path d="M6.500 9.500L10 8L14 9.500V14L10.500 16.500L6.500 14.500Z" fill={C.Y} {...st} />
      <path d="M6.500 9.500L10.500 11L14 9.500M10.500 11V16.500" fill="none" {...st} strokeWidth=".8" />
    </g>
  ),
  material: (
    <g>
      <circle cx="2.500" cy="2.500" r="2" fill="#fff" stroke="#555" />
      <circle cx="2.500" cy="9.500" r="2" fill="#7cc4ea" stroke="#2a6a90" />
      <circle cx="2.500" cy="16" r="2" fill="#f3c62e" stroke="#9a7410" />
      <path d="M6.500 2.500H19M6.500 9.500H19M6.500 16H11" stroke="#333" strokeWidth="1.600" />
      <circle cx="15.500" cy="15.500" r="3.200" fill="#bbb" stroke="#333" strokeWidth="2" strokeDasharray="2.200 1" />
      <circle cx="15.500" cy="15.500" r="2.500" fill="none" stroke="#333" strokeWidth="1.500" />
    </g>
  ),
  plane: <Plane />,
  origin: (
    <g>
      <path d="M4 3V16.500H18" fill="none" stroke="#222" strokeWidth="1.600" />
      <path d="M4 .5L6.500 5.500H1.500ZM19.500 16.500L15 14V19Z" fill="#222" />
      <circle cx="4" cy="16.500" r="2" fill="#222" />
    </g>
  ),

  zoomfit: (
    <g>
      <path d="M1 18.500L7 12" stroke="#3a8ab8" strokeWidth="3" />
      <circle cx="12" cy="8" r="6" fill="#f8f8f8" stroke="#555" strokeWidth="1.200" />
      <path d="M12 3.500L13.500 5.500H10.500ZM12 12.500L13.500 10.500H10.500ZM7.500 8L9.500 6.500V9.500ZM16.500 8L14.500 6.500V9.500Z" fill="#333" />
    </g>
  ),
  zoomarea: (
    <g>
      <path d="M5 1.500H18.500V15" fill="none" stroke="#444" strokeDasharray="3 1.500" />
      <path d="M1 18.500L6 13" stroke="#3a8ab8" strokeWidth="3" />
      <circle cx="10" cy="9" r="6" fill="#f1f6f9" stroke="#777" strokeWidth="1.200" />
    </g>
  ),
  prevview: (
    <g>
      <path d="M1 14L11 6L17 1L19 3L14 9L5 18Z" fill="#d9d9d9" stroke="#555" />
      <path d="M9 7L13 11" stroke="#555" />
      <path d="M9 14.500L13 11V13H18.500V16H13V18Z" fill="#3a8ab8" />
    </g>
  ),
  section: (
    <g>
      <path d="M1.500 5C4 1 16 1 18.500 5V15H13V8H8V18.500H1.500Z" fill="#dcdcdc" stroke="#444" />
      <path d="M1.500 6L8 7V18.500H1.500ZM13 7L18.500 6V15.500L13 16.500Z" fill="#5ba3cc" stroke="#174d70" />
      <path d="M2 12L8 8M3 17L8 12M13.500 12L18 8" stroke="#174d70" />
      <path d="M9 7H12V15L9 17Z" fill="#eee" stroke="#777" strokeWidth=".7" />
    </g>
  ),
  dynview: (
    <g>
      <path d="M5 2H14L11 7H13L6 12L8 7H5Z" fill="#f3b32a" stroke="#a06a10" strokeWidth=".7" />
      <path d="M1 15L15 3L18 6L5 18Z" fill="#d9d9d9" stroke="#555" />
      <path d="M10.500 18.500L14.500 9L18.500 18.500M12 15.500H17" stroke="#2a7cab" strokeWidth="1.700" fill="none" />
    </g>
  ),
  orient: (
    <g>
      <path d="M1.500 6L6 1.500H18.500V13L14 18.500" fill="#fff" stroke="#444" />
      <path d="M14 6L18.500 1.500M8 1.500V6M14 10H18.500M12 1.500V6" stroke="#444" />
      <rect x="1.500" y="6.500" width="12" height="12" fill="#6aaed3" stroke="#24648a" />
    </g>
  ),
  display: (
    <g stroke="#444" strokeLinejoin="round">
      <path d="M2 4L8 1.500L18 4V15L11 18.500L2 15.500Z" fill="#d4ebf6" />
      <path d="M2 4L11 6.500V18.500L2 15.500Z" fill="#6aaed3" />
      <path d="M2 4L8 1.500L18 4L11 6.500Z" fill="#e8f5fb" />
    </g>
  ),
  eye: (
    <g>
      <path d="M1 10C5 4 15 4 19 10C15 15.500 5 15.500 1 10Z" fill="#f2f2f2" stroke="#999" />
      <circle cx="10" cy="9.500" r="4" fill="#777" />
      <path d="M10 5.500A4 4 0 0 1 10 13.500Z" fill="#222" />
      <path d="M10 1V19" stroke="#444" />
    </g>
  ),
  appearance: (
    <g>
      <Globe />
      <path d="M8 18L9.500 13.500L16.500 7.500L19 10L12.500 17Z" fill="#f5dc8a" stroke="#444" strokeWidth=".9" />
      <path d="M8 18L9 15.500L10.700 17Z" fill="#222" />
    </g>
  ),
  sceneico: (
    <g>
      <path d="M1 9V19H19V9Z" fill="#444" />
      <path d="M2 13H5V16H2ZM7 16H10V19H7ZM12 16H15V18H12ZM15 12H18V15H15Z" fill="#ddd" />
      <g transform="translate(0 -1.500)"><Globe /></g>
    </g>
  ),
  monitor: (
    <g>
      <rect x="1.500" y="3" width="17" height="11" fill="#d9d9d9" stroke="#444" strokeWidth="1.200" />
      <path d="M10 14V18M6 18H14" stroke="#444" strokeWidth="1.600" />
    </g>
  ),

  portal: (
    <g>
      <circle cx="10" cy="10" r="9" fill="#1c5680" stroke="#123a58" />
      <ellipse cx="10" cy="5.500" rx="6.500" ry="3.500" fill="#6fa9cf" opacity=".7" />
      <path d="M8.500 7H10.500C13.500 7.500 13.500 12.500 10.500 13H8.500V9.500" fill="none" stroke="#cfe6f5" strokeWidth="1.200" />
      <circle cx="4" cy="10" r="1" fill="#fff" /><circle cx="16.500" cy="10" r="1" fill="#fff" />
      <circle cx="10" cy="16.500" r="1.400" fill="#fff" />
    </g>
  ),
  library: (
    <g fill="#f1f1f1" stroke="#333" strokeWidth="1" strokeLinejoin="round">
      <path d="M12 4L16 1.500L18 3V14L14 17.500Z" />
      <path d="M8 5L12 2.500L14 5V17.500L11 18.500Z" />
      <path d="M2.500 5L8 2L11 6V18.500L8.500 18.500Z" />
      <path d="M2.500 5L6.500 7V18.500L2.500 14ZM6.500 7L11 4.500" />
    </g>
  ),
  openfolder: (
    <g stroke="#444" strokeWidth="1.100" strokeLinejoin="round">
      <path d="M1 17V3H6L7.500 5H15V8L6 17Z" fill="#bbb" />
      <path d="M3 17.500L7 8H19L15 17.500Z" fill="#f2f2f2" />
    </g>
  ),
  palette: (
    <g>
      <rect x="1.500" y="2.500" width="17" height="15" fill="#fff" stroke="#333" strokeWidth="1.200" />
      <path d="M3.500 5H11V8H3.500ZM13.500 5H16.500V8H13.500ZM6 12H7V10H10V12H12V15H4V12Z" fill="#f5c52c" stroke="#7a5b05" strokeWidth=".9" />
      <path d="M14 11H18V17H14Z" fill="#bbb" stroke="#444" strokeWidth=".8" />
    </g>
  ),
  link: (
    <g fill="none" stroke="#8d877e" strokeWidth="1.600">
      <rect x="1" y="5.500" width="18" height="9" rx="4.500" />
      <rect x="4" y="8" width="6" height="4" rx="2" strokeWidth="1" />
      <path d="M10 6L13 10V14M8 10H12M13 8.500H15.500V11.500H13" strokeWidth="1.200" />
    </g>
  ),
  tag: (
    <g fill="#e8e8e8" stroke="#444" strokeWidth="1.100" strokeLinejoin="round">
      <path d="M2 7L9 2L18 9V14L12 18.500L3 11.500Z" />
      <path d="M2 7L12 14L18 9M12 14V18.500" fill="none" />
      <circle cx="7" cy="7" r="2" />
    </g>
  ),
};
const Icon = ({ n, s = 18, w, c = "#444" }) => (
  <svg width={w || s} height={s} viewBox="0 0 20 20" preserveAspectRatio="none" color={c}>
    {icons[n]}
  </svg>
);

/* ---------- drawings ---------- */
const Texture = ({ id, freq, seed, strength }) => (
  <filter id={id} x="0" y="0" width="100%" height="100%" colorInterpolationFilters="sRGB">
    <feTurbulence type="fractalNoise" baseFrequency={freq} numOctaves="4" seed={seed} result="n" />
    <feColorMatrix
      in="n"
      type="matrix"
      values={`${strength * 2} 0 0 0 ${0.5 - strength} ${strength * 2} 0 0 0 ${0.5 - strength} ${strength * 2} 0 0 0 ${0.5 - strength} 0 0 0 0 1`}
      result="g"
    />
    <feBlend in="g" in2="SourceGraphic" mode="soft-light" result="b" />
    <feComposite in="b" in2="SourceGraphic" operator="in" />
  </filter>
);

const axisColor = { X: ["#d40000", "#ff3b3b"], Y: ["#138a1c", "#2a9a2a"], Z: ["#0000a8", "#3030ff"] };
const Arm = ({ a, x1, y1, x2, y2, lx, ly }) => {
  const d = Math.hypot(x2 - x1, y2 - y1);
  const ux = (x2 - x1) / d;
  const uy = (y2 - y1) / d;
  const bx = x2 - ux * 8;
  const by = y2 - uy * 8;
  return (
    <g>
      <path d={`M${x1} ${y1}L${bx} ${by}`} stroke={axisColor[a][0]} strokeWidth="3.4" />
      <path d={`M${x2} ${y2}L${bx - uy * 4} ${by + ux * 4}L${bx + uy * 4} ${by - ux * 4}Z`} fill={axisColor[a][0]} />
      <text x={lx} y={ly + 3} textAnchor="middle" fontFamily="Liberation Sans, sans-serif" fontSize="8.500" fill={axisColor[a][1]}>{a}</text>
    </g>
  );
};

const gear =
  "M626 58L903 333L1018 220V612H1181L905 889L1018 1004H626V1166L348 889L233 1004V612H70L347 333L233 219H626Z";
const bore = "M-42 -160A166 166 0 1 0 42 -160V-203H-42Z";

const TopView = () => (
  <Scene width="842" height="441" viewBox="230 139 842 441">
    <defs>
      <Texture id="topTex" freq="0.03 0.045" seed="7" strength={0.42} />
    </defs>
    <g filter="url(#topTex)">
      <rect x="297" y="301" width="103" height="105" fill="#72046f" />
      <rect x="400" y="301" width="248" height="105" fill="#ac28aa" />
      <rect x="648" y="301" width="176" height="105" fill="#ae03ab" />
      <rect x="824" y="301" width="73" height="105" fill="#67035f" />
      <rect x="897" y="301" width="102" height="105" fill="#ac28aa" />
      <g fill="#f540ee" opacity=".3">
        <path d="M420 330L433 304L452 304L447 335L432 345Z" />
        <path d="M489 303L512 304L516 328L503 333L493 320Z" />
        <path d="M458 347L480 342L505 358L496 383L470 372Z" />
        <path d="M467 392L495 385L500 402L480 405H462Z" />
        <path d="M572 386C590 394 610 394 618 384C614 402 585 402 572 386Z" />
        <path d="M522 340L545 330L560 352L540 376L524 360Z" opacity=".5" />
        <path d="M595 352L602 345L606 362L595 372L586 356Z" opacity=".6" />
        <path d="M905 344L925 340L934 358L915 376Z" opacity=".6" />
        <path d="M925 392L960 384L966 402L930 405Z" opacity=".8" />
      </g>
      <g fill="#ff18f4" opacity=".4">
        <path d="M772 325L786 304L802 308L798 330L783 345Z" />
        <path d="M690 386C705 394 722 394 734 386C724 402 704 402 690 386Z" />
        <path d="M812 350L823 345V374L814 366Z" opacity=".6" />
        <path d="M897 322L903 303L910 310L904 332L897 336Z" />
        <path d="M961 303L981 303L984 325L970 330Z" opacity=".8" />
        <path d="M752 370L792 362L806 386L770 400Z" opacity=".3" />
      </g>
      <g fill="#b800b8" opacity=".24">
        <path d="M303 330L322 306L332 318L318 342Z" />
        <path d="M340 350L365 344L375 372L350 372Z" />
        <path d="M350 388L372 384L384 396L372 405H348Z" />
        <path d="M372 305L396 302V335L384 332Z" />
        <path d="M826 380L846 376L856 392L838 402Z" opacity=".6" />
      </g>
      <g fill="#4a0a60" opacity=".22">
        <path d="M588 306L620 306V322L592 318Z" />
        <path d="M524 388H560V399H524Z" />
        <path d="M600 356L640 366L618 380L604 366Z" />
        <path d="M704 306L735 306L736 326L708 320Z" />
        <path d="M648 388L674 386V399H648Z" />
        <path d="M497 360L520 355L522 384L500 376Z" />
        <path d="M516 320L520 348L526 372L519 374Z" />
      </g>
    </g>
    <path d="M297.500 300.500V406M400 301V406M648.500 301V406M823.500 301V406M896.500 301V406M999.500 301V406" stroke="#0c000c" strokeWidth="1.300" />
    <path d="M297 300.800H1000M297 406H1000" stroke="#000" strokeWidth="1.700" />
    <path d="M843 406H1000" stroke="#ff8412" strokeWidth="2" />
    <Arm a="X" x1={270} y1={522.5} x2={299} y2={522.5} lx={306.5} ly={519} />
    <Arm a="Z" x1={270} y1={522} x2={270} y2={551} lx={270.5} ly={555} />
    <circle cx="270" cy="521" r="3.200" fill="#0d5a18" />
    <text x="270" y="521" textAnchor="middle" fontFamily="Liberation Sans, sans-serif" fontSize="8" fill="#2a9a2a">Y</text>
  </Scene>
);

const glints = [[432, 385], [815, 385], [432, 755], [815, 755], [720, 200], [720, 935], [345, 565]];
const FrontView = () => (
  <Scene width="842" height="460" viewBox="230 584 842 460">
    <defs>
      <Texture id="frontTex" freq="0.016 0.018" seed="21" strength={0.5} />
      <clipPath id="gearClip"><path d={gear} /></clipPath>
    </defs>
    <g transform="translate(440 610) scale(.33333)">
      <g filter="url(#frontTex)">
        <path d={gear} fill="#a113a0" />
        <g clipPath="url(#gearClip)" fill="#e020e0">
          {glints.map(([x, y]) => (
            <g key={`${x}-${y}`} transform={`translate(${x} ${y})`}>
              <path d="M-42 -6C-20 -28 28 -22 46 2C20 -6 10 30 -14 24C-30 20 -40 8 -42 -6Z" opacity=".42" />
              <path d="M-30 30L20 20L60 44L30 78L-20 70Z" opacity=".16" />
              <path d="M148 -108L176 -122L190 -98L172 -70L150 -84Z" opacity=".32" />
              <path d="M36 -110L66 -118L74 -82L44 -72Z" opacity=".2" />
              <path d="M-100 -40L-70 -54L-56 -20L-88 -4Z" opacity=".14" />
            </g>
          ))}
        </g>
      </g>
      <path d={gear} fill="none" stroke="#12000f" strokeWidth="3.600" />
      <path d={bore} transform="translate(626 612)" fill="#fff" stroke="#000" strokeWidth="3.600" />
    </g>
    <Arm a="Y" x1={270} y1={986} x2={270} y2={957} lx={270.5} ly={947} />
    <Arm a="X" x1={270} y1={986} x2={299} y2={986} lx={306.5} ly={983} />
    <circle cx="270" cy="986" r="3.800" fill="#0000a8" />
  </Scene>
);

const isoFront =
  "M208 131L498 297L500 158L707 516L791 469L793 804L913 876L709 995L791 1143L499 977V1113L291 759L206 804V467L85 398L290 278Z";
const isoSides = [
  ["M208 131L330 58L500 157L498 297Z", "#b409b0"],
  ["M500 158L622 88L828 442L707 516Z", "#ac17a8"],
  ["M791 469L916 398V736L793 804Z", "#7a077a"],
  ["M793 804L916 736L1036 804L913 876Z", "#b308b0"],
  ["M709 995L830 926L915 1073L791 1143Z", "#a818a6"],
  ["M499 977L618 1047L499 1113Z", "#86078a"],
];
const isoM = "matrix(.746 .431 0 .863 499 637)";

const IsoView = () => (
  <Scene width="843" height="463" viewBox="1076 117 843 463">
    <defs>
      <Texture id="isoTex" freq="0.012 0.018" seed="4" strength={0.4} />
      <clipPath id="boreClip"><path d={bore} transform={isoM} /></clipPath>
      <linearGradient id="boreFill" gradientUnits="userSpaceOnUse" x1="420" y1="450" x2="560" y2="800">
        <stop offset="0" stopColor="#4a0048" />
        <stop offset=".25" stopColor="#a505a2" />
        <stop offset=".55" stopColor="#bd12b9" />
        <stop offset="1" stopColor="#ad08a9" />
      </linearGradient>
    </defs>
    <g transform="translate(1320 120) scale(.33333)" strokeLinejoin="round">
      <g filter="url(#isoTex)">
        <path d={isoFront} fill="#560458" />
        {isoSides.map(([d, f]) => <path key={d} d={d} fill={f} />)}
        <g fill="#f020ea" opacity=".28">
          <path d="M310 90L340 70L372 96L350 118Z" />
          <path d="M540 150L590 125L612 170L570 190Z" />
          <path d="M700 380L760 350L785 400L740 430Z" />
          <path d="M590 270L640 240L660 290L620 310Z" opacity=".5" />
        </g>
      </g>
      <g fill="none" stroke="#0b000b" strokeWidth="3.600">
        <path d={isoFront} />
        {isoSides.map(([d]) => <path key={d} d={d} />)}
      </g>
      <g clipPath="url(#boreClip)">
        <rect x="360" y="430" width="280" height="380" fill="url(#boreFill)" filter="url(#isoTex)" />
        <path d="M467 440H500V463L467 482Z" fill="#5c035c" />
        <path d="M467 480L497 463" stroke="#0b000b" strokeWidth="3" />
        <path d="M415 668C450 655 490 635 520 604" fill="none" stroke="#8a0688" strokeWidth="9" opacity=".6" />
        <path d={bore} transform="translate(122 -71) matrix(.746 .431 0 .863 499 637)" fill="#fff" stroke="#000" strokeWidth="4.200" />
      </g>
      <path d={bore} transform={isoM} fill="none" stroke="#000" strokeWidth="4.200" />
    </g>
    <Arm a="Y" x1={1115} y1={522} x2={1115} y2={498} lx={1115.5} ly={490} />
    <Arm a="X" x1={1115} y1={522} x2={1136} y2={533.5} lx={1141} ly={534} />
    <Arm a="Z" x1={1115} y1={522} x2={1094} y2={533.5} lx={1090.5} ly={534} />
  </Scene>
);

const RightView = () => (
  <Scene width="843" height="460" viewBox="1076 584 843 460">
    <g fill="none" stroke="#000" strokeWidth="1.500">
      <path d="M1466.500 607V1021M1528.800 607V1021" />
      <path d="M1466 667.800H1529.500M1466 917.300H1529.500M1466 960H1529.500" />
      <path d="M1466 607H1529.500M1466 814H1529.500M1466 1020.800H1529.500" strokeWidth="2" />
      <path d="M1466 667V710M1529.300 667V710M1466 738V874M1529.300 738V874" strokeWidth="1.300" />
    </g>
    <path d="M1468 710.500H1528M1468 738.500H1528M1468 753.500H1528M1468 874.500H1528" stroke="#b5b5b5" strokeDasharray="4 2" />
    <Arm a="Y" x1={1115} y1={986} x2={1115} y2={957} lx={1115.5} ly={947} />
    <circle cx="1116" cy="986.500" r="3.500" fill="#c00000" />
    <Arm a="Z" x1={1115} y1={986} x2={1086} y2={986} lx={1079.5} ly={983} />
  </Scene>
);

/* ---------- data ---------- */
const menus = [["File", 34], ["Edit", 37], ["View", 40], ["Insert", 45], ["Tools", 43], ["Window", 54]];
const tabs = [
  ["Features", 64], ["Sketch", 56], ["Markup", 57], ["Evaluate", 60], ["MBD Dimensions", 107],
  ["SOLIDWORKS Add-Ins", 133], ["MBD", 56], ["SOLIDWORKS CAM", 121], ["SOLIDWORKS CAM TBM", 145], ["SOLIDWORKS Inspection", 147],
];
const tree = [
  ["part", "Ratchet_WHEEL (Default) <<Default>_", 0, 1],
  ["folder", "Folder", 1], ["sensors", "Sensors", 0], ["annot", "Annotations", 1], ["bodies", "Solid Bodies(1)", 1],
  ["material", "Material <not specified>", 0], ["plane", "Front Plane", 0], ["plane", "Top Plane", 0],
  ["plane", "Right Plane", 0], ["origin", "Origin", 0], ["extrude", "Boss-Extrude1", 1],
];

const BigButton = ({ n, label, w, drop }) => (
  <Big $w={w}>
    <Icon n={n} s={19} />
    <BigLabel>{label}</BigLabel>
    {drop && <BigDrop><Drop /></BigDrop>}
  </Big>
);
const SmallCol = ({ items, ml, w }) => (
  <Col $ml={ml} $w={w}>
    {items.map(([n, t]) => <Small key={t}><Icon n={n} s={18} />{t}</Small>)}
  </Col>
);

export default function App() {
  return (
    <Window>
      <Global />
      <TitleBar>
        <Brand>
          <Icon n="ds" s={21} w={21} />
          <BrandName><b>SOLID</b>WORKS</BrandName>
        </Brand>
        <Menu>
          {menus.map(([t, w]) => <MenuItem key={t} $w={w}>{t}</MenuItem>)}
          <Slot $w={24}><Icon n="pin" s={15} /></Slot>
        </Menu>
        <QuickBar>
          <Slot $w={24}><Icon n="home" s={19} /></Slot>
          <Slot $w={24} $ml={6}><Icon n="newdoc" s={19} /></Slot><Slot $w={20}><Drop /></Slot>
          <Slot $w={24}><Icon n="open" s={19} /></Slot><Slot $w={20}><Drop /></Slot>
          <Slot $w={24}><Icon n="save" s={19} /></Slot><Slot $w={20}><Drop /></Slot>
          <Slot $w={24}><Icon n="print" s={19} /></Slot><Slot $w={20}><Drop /></Slot>
          <Slot $w={24}><Icon n="undo" s={18} /></Slot><Slot $w={20}><Drop /></Slot>
          <Slot $w={24}><Icon n="redo" s={18} /></Slot><Slot $w={18}><Drop $c="#888" /></Slot>
          <SelectTool><SelectFace><Icon n="cursor" s={19} /></SelectFace><Center><Drop /></Center></SelectTool>
          <Slot $w={26} $ml={2}><Icon n="traffic" s={19} /></Slot>
          <Slot $w={30} $ml={2}><Icon n="options" s={19} /></Slot>
          <Slot $w={30}><Icon n="gear" s={18} /></Slot><Slot $w={14}><Drop /></Slot>
        </QuickBar>
        <DocTitle>Ratchet_WHEEL *</DocTitle>
        <SearchBox>
          <Icon n="prompt" s={15} w={15} /><SearchText>combi</SearchText>
          <Icon n="search" s={14} /><Slot $w={11} $ml={5}><Drop $c="#777" /></Slot>
        </SearchBox>
        <WinButtons>
          <Slot $w={36}><Icon n="user" s={19} /></Slot>
          <Slot $w={36}><Icon n="help" s={19} /></Slot>
          <Slot $w={36}><Icon n="min" s={19} /></Slot>
          <Slot $w={36}><Icon n="restore" s={18} /></Slot>
          <Slot $w={36}><Icon n="close" s={18} /></Slot>
        </WinButtons>
      </TitleBar>

      <Ribbon>
        <Group $w={275} $pl={6}>
          <BigButton n="extrude" w={62} label={"Extruded\nBoss/Base"} />
          <BigButton n="revolve" w={62} label={"Revolved\nBoss/Base"} />
          <SmallCol ml={3} items={[["sweep", "Swept Boss/Base"], ["loft", "Lofted Boss/Base"], ["boundary", "Boundary Boss/Base"]]} />
        </Group>
        <Group $w={270} $pl={3}>
          <BigButton n="ecut" w={51} label={"Extruded\nCut"} />
          <BigButton n="hole" w={51} label={"Hole\nWizard"} drop />
          <BigButton n="rcut" w={51} label={"Revolved\nCut"} />
          <SmallCol ml={6} w={100} items={[["scut", "Swept Cut"], ["lcut", "Lofted Cut"], ["bcut", "Boundary Cut"]]} />
        </Group>
        <Group $w={231}>
          <BigButton n="fillet" w={37} label="Fillet" drop />
          <BigButton n="pattern" w={45} label={"Linear\nPattern"} drop />
          <SmallCol ml={3} w={65} items={[["rib", "Rib"], ["draft", "Draft"], ["shell", "Shell"]]} />
          <SmallCol w={70} items={[["wrap", "Wrap"], ["intersect", "Intersect"], ["mirror", "Mirror"]]} />
        </Group>
        <Group $w={108}>
          <BigButton n="refgeo" w={62} label={"Reference\nGeometry"} drop />
          <BigButton n="curves" w={44} label="Curves" drop />
        </Group>
        <Group $w={62} $last><BigButton n="instant" w={62} label="Instant3D" /></Group>
        <Collapse><Icon n="chevron" s={14} /></Collapse>
      </Ribbon>

      <Body>
        <LeftHalf>
          <TabStrip>
            {tabs.map(([t, w], i) => <Tab key={t} $w={w} $on={i === 0}>{t}</Tab>)}
          </TabStrip>
          <LeftRow>
            <Manager>
              <Grip><Dot /></Grip>
              <MgrTabs>
                <MgrTab $w={42} $pl={3} $on><Icon n="part" s={18} /></MgrTab>
                <MgrTab $w={40}><Icon n="props" s={18} /></MgrTab>
                <MgrTab $w={40}><Icon n="config" s={18} /></MgrTab>
                <MgrTab $w={40} $pl={1}><Icon n="target" s={19} /></MgrTab>
                <MgrTab $w={29} $pl={10} $open><Icon n="globe" s={19} w={19} /></MgrTab>
                <Scrollers>
                  <Scroller><Side $left /></Scroller>
                  <Scroller><Side /></Scroller>
                </Scrollers>
              </MgrTabs>
              <Filter><Icon n="filter" s={18} /></Filter>
              <Tree>
                {tree.map(([n, t, ex, root]) => (
                  <Row key={t} $ls={root ? -0.25 : -0.2}>
                    <Expander $root={root}>{ex ? <Side $s={4} $c="#555" /> : null}</Expander>
                    <RowIcon $root={root}><Icon n={n} s={18} /></RowIcon>
                    {t}
                  </Row>
                ))}
                <Rollback />
              </Tree>
              <HScroll />
              <HScrollFoot />
              <SplitHandle><Dot /></SplitHandle>
            </Manager>
            <Views>
              <Pane $h={441}>
                <TopView />
                <HeadsUp>
                  <Slot $o={0.8} $w={26}><Icon n="zoomfit" s={19} /></Slot>
                  <Slot $o={0.8} $w={26}><Icon n="zoomarea" s={19} /></Slot>
                  <Slot $o={0.8} $w={26}><Icon n="prevview" s={18} /></Slot>
                  <Slot $o={0.8} $w={25}><Icon n="section" s={18} /></Slot>
                  <Slot $o={0.8} $w={26}><Icon n="dynview" s={19} /></Slot>
                  <Slot $o={0.8} $w={26}><Icon n="orient" s={18} /></Slot><Slot $w={13}><Drop $c="#888" /></Slot>
                  <Slot $o={0.8} $w={29}><Icon n="display" s={18} /></Slot><Slot $w={10}><Drop $c="#888" /></Slot>
                  <Slot $o={0.8} $w={32}><Icon n="eye" s={18} /></Slot><Slot $w={6}><Drop $c="#888" /></Slot>
                  <Slot $o={0.8} $ml={4} $w={27}><Icon n="appearance" s={20} /></Slot>
                  <Slot $o={0.8} $w={25}><Icon n="sceneico" s={19} /></Slot><Slot $w={13}><Drop $c="#888" /></Slot>
                  <Slot $o={0.8} $w={28}><Icon n="monitor" s={19} /></Slot><Slot $w={11}><Drop $c="#888" /></Slot>
                </HeadsUp>
                <ViewLabel $pl={11}><Icon n="link" s={16} />*Top</ViewLabel>
              </Pane>
              <HBar />
              <Pane $h={460}>
                <FrontView />
                <ViewLabel $pl={11}><Icon n="link" s={16} />*Front</ViewLabel>
              </Pane>
            </Views>
          </LeftRow>
        </LeftHalf>
        <Divider>
          <VBar $h={463} />
          <HBar />
          <VBar $h={460} />
        </Divider>
        <Views>
          <Pane $h={463}>
            <IsoView />
            <DocControls>
              <Slot $w={26}><Icon n="dockL" s={20} c="#9a9a9a" /></Slot>
              <Slot $w={26}><Icon n="dockR" s={20} c="#9a9a9a" /></Slot>
              <Slot $w={26}><Icon n="min" s={19} c="#9a9a9a" /></Slot>
              <Slot $w={26}><Icon n="restore" s={18} c="#9a9a9a" /></Slot>
              <Slot $w={26}><Icon n="close" s={18} c="#9a9a9a" /></Slot>
            </DocControls>
            <TaskPane>
              {["portal", "home", "library", "openfolder", "palette", "globe", "props"].map((n, i) => (
                <TaskItem key={n} $first={i === 0} $on={n === "globe"}><Icon n={n} s={19} w={19} /></TaskItem>
              ))}
            </TaskPane>
            <ViewLabel $pl={14} $ls={0.5}>*Isometric</ViewLabel>
          </Pane>
          <HBar />
          <Pane $h={460}>
            <RightView />
            <ViewLabel $pl={15} $ls={0.5}><Icon n="link" s={16} />*Right</ViewLabel>
          </Pane>
        </Views>
      </Body>

      <SheetBar>
        <NavButtons>
          <NavButton $first><Side $left $s={4} $c="#8a8a8a" /></NavButton>
          <NavButton><Side $left $s={4} $c="#8a8a8a" /></NavButton>
          <NavButton><Side $s={4} $c="#8a8a8a" /></NavButton>
          <NavButton $last><Side $s={4} $c="#8a8a8a" /></NavButton>
        </NavButtons>
        <Sheet $w={57} $pl={11} $on>Model</Sheet>
        <Sheet $w={68} $pl={10} $ls={-0.4}>3D Views</Sheet>
        <Sheet $w={108} $pl={9}>Motion Study 1</Sheet>
      </SheetBar>
      <Status>
        <StatusItem $w={1634}>SOLIDWORKS Premium 2024 SP1.0</StatusItem>
        <StatusItem $w={179}>Editing Part</StatusItem>
        <StatusItem $w={54}>MMGS</StatusItem>
        <Up />
        <Slot $w={18} $ml={25}><Icon n="tag" s={16} /></Slot>
      </Status>
      <Under />
    </Window>
  );
}
